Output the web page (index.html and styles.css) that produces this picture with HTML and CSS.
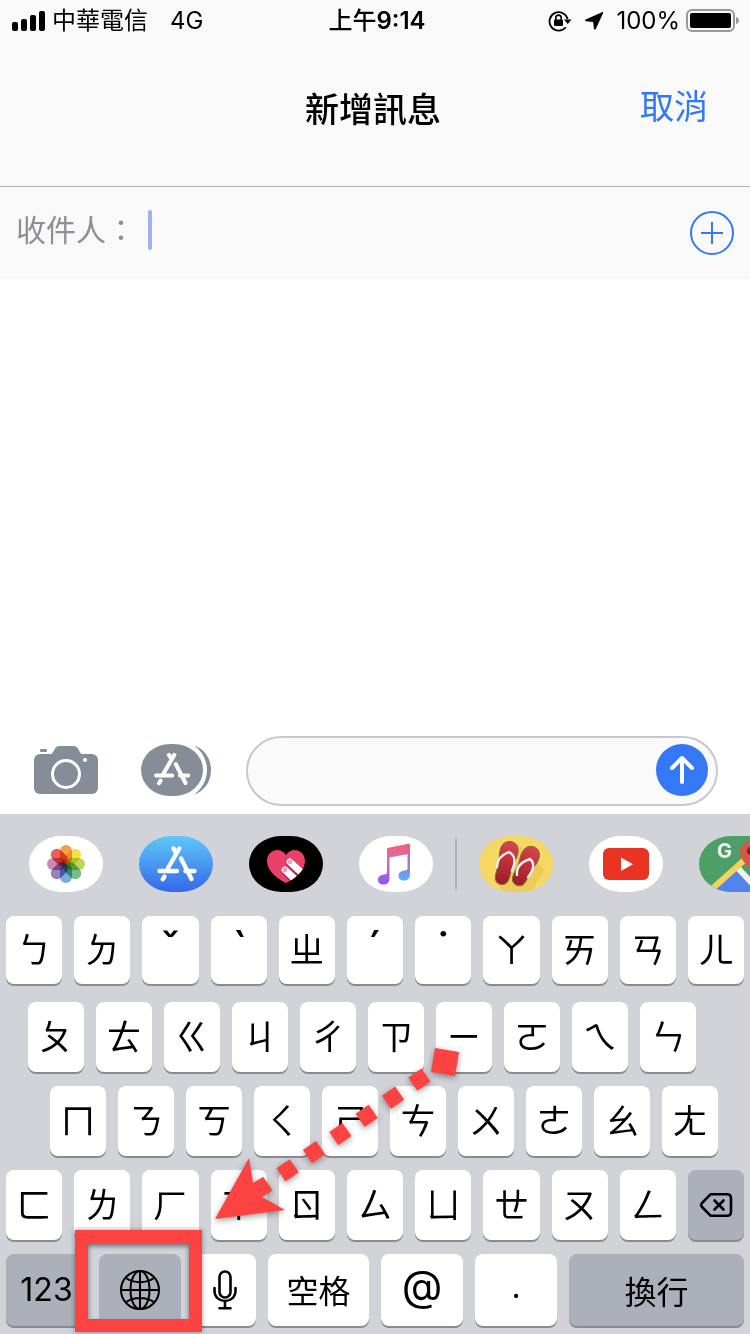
FILE: index.html
```html
<!DOCTYPE html>
<html lang="zh-Hant">
<head>
    <meta charset="UTF-8">
    <meta name="viewport" content="width=device-width, initial-scale=1.0">
    <title>新增訊息</title>
    <link rel="stylesheet" href="styles.css">
</head>
<body>

    <div class="status-bar">
        <div class="status-left">
            <svg class="signal" width="34" height="20" viewBox="0 0 34 20">
                <rect x="0" y="11" width="6" height="9" rx="2"/>
                <rect x="9" y="8" width="6" height="12" rx="2"/>
                <rect x="18" y="4" width="6" height="16" rx="2"/>
                <rect x="27" y="0" width="6" height="20" rx="2"/>
            </svg>
            <span>中華電信</span>
            <span class="network">4G</span>
        </div>
        <div class="clock"><span class="period">上午</span>9:14</div>
        <div class="status-right">
            <svg width="24" height="22" viewBox="0 0 24 22">
                <path d="M17.8 17.2A9.2 9.2 0 1 1 19.6 9" fill="none" stroke="#000" stroke-width="1.8"/>
                <path d="M16 9.5h7.5L19.700 14z"/>
                <rect x="6" y="9.5" width="9" height="6.5" rx="1"/>
                <path d="M7.8 10V7.8a2.7 2.7 0 0 1 5.4 0V10" fill="none" stroke="#000" stroke-width="1.6"/>
            </svg>
            <svg class="location" width="20" height="20" viewBox="0 0 20 20">
                <path d="M18 1.2c.8-.3 1.3.1 1 1L11.800 18c-.4.9-1.800.8-1.900-.2L9.200 10.900 1.900 10.200c-1-.1-1.100-1.200-.2-1.600z"/>
            </svg>
            <span>100%</span>
            <svg class="battery" width="54" height="24" viewBox="0 0 54 24">
                <rect x="1" y="1" width="47" height="21" rx="5" fill="none" stroke="#999" stroke-width="2"/>
                <rect x="4" y="4" width="41" height="15" rx="2"/>
                <path d="M50 8c4 1 4 6 0 7z" fill="#999"/>
            </svg>
        </div>
    </div>

    <header class="nav-bar">
        <h1>新增訊息</h1>
        <button class="btn-cancel">取消</button>
    </header>

    <div class="recipient">
        <label for="recipientName">收件人：</label>
        <span class="caret"></span>
        <input type="text" id="recipientName">
        <button class="btn-add" aria-label="加入聯絡人">
            <svg width="44" height="44" viewBox="0 0 44 44" fill="none" stroke="#3478f6" stroke-width="2">
                <circle cx="22" cy="22" r="21"/>
                <path d="M11 22h22M22 11v22"/>
            </svg>
        </button>
    </div>

    <main class="conversation"></main>

    <div class="compose">
        <button class="btn-camera" aria-label="相機">
            <svg width="64" height="50" viewBox="0 0 64 50" fill="#868d99">
                <rect x="0" y="9" width="64" height="40" rx="6"/>
                <path d="M15 10c6-1 4-9 11-9h13c7 0 5 8 11 9z"/>
                <rect x="6" y="4" width="7" height="3" rx="1"/>
                <circle cx="32" cy="29" r="13.500" stroke="#fff" stroke-width="3"/>
                <circle cx="51" cy="15" r="2" fill="#fff"/>
            </svg>
        </button>
        <button class="btn-apps" aria-label="App">
            <svg width="70" height="52" viewBox="0 0 70 52" fill="#868d99">
                <rect x="0" y="0" width="62" height="52" rx="29" ry="26"/>
                <path d="M53 1.500C64 5 70 15 70 26S64 47 53 50.500C61 45 66 36 66 26S61 7 53 1.500z"/>
                <use href="#appA" transform="translate(-3.800 -.6) scale(.92)"/>
            </svg>
        </button>
        <div class="message-box">
            <input type="text" id="message" aria-label="訊息">
            <button class="btn-send" aria-label="傳送">
                <svg width="52" height="52" viewBox="0 0 52 52" fill="none" stroke="#fff" stroke-width="4" stroke-linecap="round" stroke-linejoin="round">
                    <path d="M26 38V14M16 24l10-10 10 10"/>
                </svg>
            </button>
        </div>
    </div>

    <section class="keyboard">
        <div class="app-strip">
            <div class="app-group">
                <button class="app" aria-label="照片">
                    <svg class="petals" width="74" height="56" viewBox="0 0 74 56">
                        <g transform="translate(37 28)">
                            <rect x="-6" y="-19" width="12" height="19" rx="6" fill="#f3a04a"/>
                            <rect x="-6" y="-19" width="12" height="19" rx="6" fill="#f4e04a" transform="rotate(45)"/>
                            <rect x="-6" y="-19" width="12" height="19" rx="6" fill="#bdd65c" transform="rotate(90)"/>
                            <rect x="-6" y="-19" width="12" height="19" rx="6" fill="#74bd84" transform="rotate(135)"/>
                            <rect x="-6" y="-19" width="12" height="19" rx="6" fill="#76aede" transform="rotate(180)"/>
                            <rect x="-6" y="-19" width="12" height="19" rx="6" fill="#9482bd" transform="rotate(225)"/>
                            <rect x="-6" y="-19" width="12" height="19" rx="6" fill="#c98bb5" transform="rotate(270)"/>
                            <rect x="-6" y="-19" width="12" height="19" rx="6" fill="#e8605a" transform="rotate(315)"/>
                        </g>
                    </svg>
                </button>
                <button class="app app-store" aria-label="App Store">
                    <svg width="74" height="56" viewBox="0 0 74 56">
                        <g id="appA" fill="none" stroke="#fff" stroke-width="4.400" stroke-linecap="round">
                            <path d="M40.300 12.500L28.500 33M34.500 12.500l3 5M42 22.500L52.500 43M20.500 35H38M46.500 35h9M25.500 40.500l-1.800 2.800"/>
                        </g>
                    </svg>
                </button>
                <button class="app app-heart" aria-label="Digital Touch">
                    <svg width="74" height="56" viewBox="0 0 74 56">
                        <clipPath id="heart">
                            <path d="M37 47C25 41 18 33 18 25c0-11 13-15 19-6 6-9 19-5 19 6 0 8-7 16-19 22z"/>
                        </clipPath>
                        <g clip-path="url(#heart)">
                            <rect width="74" height="56" fill="#ea4069"/>
                            <path d="M41 26.500L56 41M36 34.500L50 48" stroke="#b52348" stroke-width="8.500" stroke-linecap="round"/>
                            <path d="M41 26L56 40M36 34L50 47" stroke="#fff" stroke-width="7" stroke-linecap="round"/>
                            <circle cx="41" cy="26" r="2.400" fill="#f2a0b8"/>
                            <circle cx="36" cy="34" r="2.400" fill="#f2a0b8"/>
                        </g>
                    </svg>
                </button>
                <button class="app" aria-label="音樂">
                    <svg width="74" height="56" viewBox="0 0 74 56">
                        <defs>
                            <linearGradient id="noteLeft" gradientUnits="userSpaceOnUse" x1="0" y1="8" x2="0" y2="48">
                                <stop offset="0" stop-color="#fa5f6c"/>
                                <stop offset=".4" stop-color="#d46abd"/>
                                <stop offset="1" stop-color="#8f55fb"/>
                            </linearGradient>
                            <linearGradient id="noteRight" gradientUnits="userSpaceOnUse" x1="0" y1="8" x2="0" y2="44">
                                <stop offset="0" stop-color="#e8606e"/>
                                <stop offset=".5" stop-color="#9b7ade"/>
                                <stop offset="1" stop-color="#58aef5"/>
                            </linearGradient>
                        </defs>
                        <path d="M28 13.500q0-1.500 1.500-1.800L49.500 7.800V18L30.500 21.500V42c0 5-3 6.500-6 6.500-3.500 0-5.500-2-5.500-4.500 0-4 3-5 6-5.500 2.500-.4 3-.5 3-3z" fill="url(#noteLeft)"/>
                        <path d="M48.500 8l1-.2q1.500-.2 1.500 1.200V38c0 5-3 6.500-6 6.500-3.500 0-5.500-2-5.500-4.500 0-4 3-5 6-5.500 2.500-.4 3-.5 3-3z" fill="url(#noteRight)"/>
                    </svg>
                </button>
            </div>
            <div class="divider"></div>
            <div class="app-group">
                <button class="app app-sandals" aria-label="拖鞋">
                    <svg width="74" height="56" viewBox="0 0 74 56">
                        <defs>
                            <linearGradient id="sole" x1="0" y1="0" x2="0" y2="1">
                                <stop offset="0" stop-color="#d8454f"/>
                                <stop offset=".45" stop-color="#c0303a"/>
                                <stop offset="1" stop-color="#981c26"/>
                            </linearGradient>
                        </defs>
                        <path d="M39 8L66 34 52 56H26L16 46z" fill="#e3c04f" opacity=".5"/>
                        <path d="M27 5c6 0 9 5 9 11 0 6-2 8-2 14 0 5 0 7 0 10 0 6-3 9-7 9s-7-3-7-9c0-3 0-5 0-10 0-6-2-8-2-14 0-6 3-11 9-11z" transform="rotate(15 27 27)" fill="url(#sole)" stroke="#86643a"/>
                        <path d="M46 9c6 0 9 5 9 11 0 6-2 8-2 13 0 4 0 6 0 9 0 6-3 9-7 9s-7-3-7-9c0-3 0-5 0-9 0-5-2-7-2-13 0-6 3-11 9-11z" transform="rotate(26 46 31)" fill="url(#sole)" stroke="#86643a"/>
                        <g fill="none" stroke="#ececee" stroke-width="2.400" stroke-linecap="round" stroke-linejoin="round">
                            <path d="M18 31c0-7 4-12 12-15 6 3 7 10 3 19"/>
                            <path d="M38 39c-1-8 4-13 13-16 5 4 4 11-2 18"/>
                        </g>
                    </svg>
                </button>
                <button class="app" aria-label="YouTube">
                    <svg width="74" height="56" viewBox="0 0 74 56">
                        <rect x="14" y="12" width="46" height="32" rx="6" fill="#e93323"/>
                        <path d="M32 21.500v13.500l12-6.700z" fill="#fff"/>
                    </svg>
                </button>
                <button class="app app-maps" aria-label="Google Maps">
                    <svg width="74" height="56" viewBox="0 0 74 56">
                        <path d="M39 31L14 56h50z" fill="#5383ec"/>
                        <path d="M37 30l24 26" stroke="#f1f1f1" stroke-width="6"/>
                        <path d="M52 18L13 53" stroke="#f5d25c" stroke-width="6"/>
                        <path d="M52 38c-1-9-11-12-11-22a11 11 0 0 1 22 0c0 10-10 13-11 22z" fill="#d65745"/>
                        <circle cx="52" cy="15" r="4" fill="#6d2a22"/>
                        <text x="18" y="22" class="g-logo">G</text>
                    </svg>
                </button>
            </div>
        </div>

        <div class="key-row row-1">
            <button class="key">ㄅ</button>
            <button class="key">ㄉ</button>
            <button class="key key-tone">ˇ</button>
            <button class="key key-tone">ˋ</button>
            <button class="key">ㄓ</button>
            <button class="key key-tone">ˊ</button>
            <button class="key key-tone">˙</button>
            <button class="key">ㄚ</button>
            <button class="key">ㄞ</button>
            <button class="key">ㄢ</button>
            <button class="key">ㄦ</button>
        </div>
        <div class="key-row row-2">
            <button class="key">ㄆ</button>
            <button class="key">ㄊ</button>
            <button class="key">ㄍ</button>
            <button class="key">ㄐ</button>
            <button class="key">ㄔ</button>
            <button class="key">ㄗ</button>
            <button class="key">ㄧ</button>
            <button class="key">ㄛ</button>
            <button class="key">ㄟ</button>
            <button class="key">ㄣ</button>
        </div>
        <div class="key-row row-3">
            <button class="key">ㄇ</button>
            <button class="key">ㄋ</button>
            <button class="key">ㄎ</button>
            <button class="key">ㄑ</button>
            <button class="key">ㄕ</button>
            <button class="key">ㄘ</button>
            <button class="key">ㄨ</button>
            <button class="key">ㄜ</button>
            <button class="key">ㄠ</button>
            <button class="key">ㄤ</button>
        </div>
        <div class="key-row">
            <button class="key">ㄈ</button>
            <button class="key">ㄌ</button>
            <button class="key">ㄏ</button>
            <button class="key">ㄒ</button>
            <button class="key">ㄖ</button>
            <button class="key">ㄙ</button>
            <button class="key">ㄩ</button>
            <button class="key">ㄝ</button>
            <button class="key">ㄡ</button>
            <button class="key">ㄥ</button>
            <button class="key key-dark" aria-label="刪除">
                <svg width="34" height="26" viewBox="0 0 34 26" fill="none" stroke="#000" stroke-width="2.600" stroke-linecap="round" stroke-linejoin="round">
                    <path d="M11.500 2.300H28q4 0 4 4v13.400q0 4-4 4H11.500L3 15q-1.800-2 0-4z"/>
                    <path d="M15.500 8.500l9 9M24.500 8.500l-9 9"/>
                </svg>
            </button>
        </div>
        <div class="key-row row-5">
            <button class="key key-dark key-number">123</button>
            <button class="key key-dark key-medium" aria-label="切換鍵盤">
                <svg width="42" height="42" viewBox="0 0 42 42" fill="none" stroke="#000" stroke-width="2">
                    <circle cx="21" cy="21" r="19"/>
                    <ellipse cx="21" cy="21" rx="9.500" ry="19"/>
                    <path d="M2 21h38M21 2v38M7 9c8 5.500 20 5.500 28 0M7 33c8-5.500 20-5.500 28 0"/>
                </svg>
            </button>
            <button class="key key-mic" aria-label="聽寫">
                <svg width="26" height="40" viewBox="0 0 26 40" fill="none" stroke="#000" stroke-width="2.600" stroke-linecap="round">
                    <rect x="7.500" y="1.500" width="11" height="26" rx="5.500"/>
                    <path d="M2.500 18v2.500c0 14 21 14 21 0V18M13 31.500v6.500M7.500 38.300h11"/>
                </svg>
            </button>
            <button class="key key-space">空格</button>
            <button class="key key-medium key-at">@</button>
            <button class="key key-medium key-dot">.</button>
            <button class="key key-dark key-return">換行</button>
        </div>

        <!-- arrow pointing at the globe key -->
        <svg class="arrow" width="260" height="190" viewBox="0 0 260 190" fill="#fd4242">
            <path d="M231 8l24 4-4 24-24-4z"/>
            <path d="M222 35L58 148" stroke="#fd4242" stroke-width="16" stroke-dasharray="16 16"/>
            <path d="M11 179l34-61 4 25 10-6 9 13-10 7 23 13z"/>
        </svg>
        <div class="highlight"></div>
    </section>

</body>
</html>
```
FILE: styles.css
```css
* {
    box-sizing: border-box;
}
body {
    margin: 0;
    min-height: 100vh;
    display: flex;
    flex-direction: column;
    font-family: Inter, "Noto Sans CJK TC", sans-serif;
    background-color: #fff;
    color: #000;
}
button, input {
    font-family: inherit;
    color: inherit;
    border: none;
    padding: 0;
    background: none;
}
input {
    outline: none;
    width: 100%;
    min-width: 0;
}
button {
    cursor: pointer;
}
svg {
    display: block;
}

/* status bar */
.status-bar {
    display: grid;
    grid-template-columns: 1fr auto 1fr;
    align-items: center;
    height: 40px;
    padding: 1px 10px 0 12px;
    background-color: #f9f9f9;
    font-size: 24px;
    line-height: 40px;
}
.status-left, .status-right {
    display: flex;
    align-items: center;
}
.signal {
    margin-right: 6px;
}
.network {
    margin-left: 22px;
}
.clock {
    padding-left: 2px;
    font-weight: 600;
}
.period {
    font-weight: 500;
}
.status-right {
    justify-content: flex-end;
}
.location {
    margin: 0 12px;
}
.battery {
    margin-left: 6px;
}

/* header */
.nav-bar {
    display: grid;
    grid-template-columns: 1fr auto 1fr;
    align-items: center;
    height: 147px;
    padding: 0 42px 12px 38px;
    background-color: #f9f9f9;
    border-bottom: 1px solid #b2b2b2;
}
.nav-bar h1 {
    grid-column: 2;
    margin: 0;
    font-size: 34px;
    font-weight: 500;
}
.btn-cancel {
    justify-self: end;
    padding-bottom: 6px;
    font-size: 34px;
    color: #3478f6;
}
.recipient {
    display: flex;
    align-items: center;
    height: 92px;
    padding: 0 16px;
    background-color: #f9f9f9;
    font-size: 30px;
}
.recipient label {
    padding-bottom: 10px;
    color: #8e8e93;
}
.recipient input {
    flex: 1;
    font-size: 30px;
}
.btn-add {
    flex: none;
}
.caret {
    flex: none;
    width: 4px;
    height: 40px;
    margin: 0 0 6px 12px;
    border-radius: 2px;
    background-color: #9fb1f2;
}
.conversation {
    flex: 1;
}

/* compose */
.compose {
    display: flex;
    align-items: center;
    padding: 0 32px 8px 34px;
}
.btn-camera, .btn-apps {
    flex: none;
    padding-bottom: 2px;
}
.btn-apps {
    margin: 0 35px 0 43px;
}
.message-box {
    flex: 1;
    min-width: 0;
    display: flex;
    align-items: center;
    height: 70px;
    padding: 0 8px 2px 24px;
    border: 2px solid #c7c7cc;
    border-radius: 35px;
    background-color: #fafafa;
}
.message-box input {
    flex: 1;
    font-size: 34px;
}
.btn-send {
    flex: none;
    width: 52px;
    height: 52px;
    border-radius: 50%;
    background-color: #3478f6;
}

/* keyboard */
.keyboard {
    position: relative;
    display: flex;
    flex-direction: column;
    gap: 14px;
    padding-bottom: 8px;
    background-color: #d1d3d9;
    overflow: hidden;
}
.app-strip {
    display: flex;
    align-items: center;
    height: 88px;
    padding: 11px 0 0 29px;
    overflow: hidden;
}
.app-group {
    display: flex;
    gap: 36px;
}
.app-group:last-child {
    flex: 1;
    min-width: 0;
    overflow: hidden;
}
.app {
    flex: none;
    width: 74px;
    height: 56px;
    border-radius: 32px / 28px;
    background-color: #fff;
    overflow: hidden;
}
.petals rect {
    mix-blend-mode: multiply;
}
.app-store {
    background: linear-gradient(#5ec8f8, #3567ea);
}
.app-heart {
    background-color: #000;
}
.app-sandals {
    background-color: #f6d865;
}
/* the last app is cut by the edge of the strip */
.app-maps {
    flex: 0 1 74px;
    min-width: 0;
    border-radius: 32px 0 0 32px / 28px 0 0 28px;
    background-color: #4c9f67;
}
.g-logo {
    font-size: 20px;
    font-weight: 700;
    fill: #f1f1f1;
}
.divider {
    flex: none;
    width: 2px;
    height: 52px;
    margin: 0 22px;
    background-color: #b2b4b9;
}
.key-row {
    display: flex;
    gap: 12px;
    height: 70px;
    padding: 0 6px;
}
.row-1 {
    height: 68px;
    margin-bottom: 4px;
}
.row-2 {
    padding: 0 54px 0 28px;
}
.row-3 {
    padding: 0 32px 0 50px;
}
.row-5 {
    height: 72px;
}
.key {
    flex: 1;
    min-width: 0;
    display: flex;
    align-items: center;
    justify-content: center;
    padding-bottom: 4px;
    border-radius: 8px;
    background-color: #fff;
    box-shadow: 0 2px 0 #898b8f;
    font-family: "Noto Sans CJK TC", sans-serif;
    font-size: 35px;
    line-height: 48px;
}
.key-tone {
    padding-bottom: 0;
    font-family: Inter, "Noto Sans", sans-serif;
    font-size: 48px;
}
.key-dark {
    padding-bottom: 0;
    background-color: #abb0bb;
}
.key-number {
    flex: 81;
    font-family: Inter, sans-serif;
    font-size: 32px;
}
.key-medium {
    flex: 82;
}
.key-mic {
    flex: 63;
    padding-bottom: 0;
}
.key-space {
    flex: 101;
    padding-bottom: 2px;
    font-size: 32px;
}
.key-at {
    padding-bottom: 8px;
    font-family: Inter, sans-serif;
    font-size: 42px;
}
.key-dot {
    padding-bottom: 6px;
    font-family: Inter, sans-serif;
    font-size: 32px;
}
.key-return {
    flex: 175;
    font-size: 32px;
}

/* marks over the keyboard */
.arrow {
    position: absolute;
    left: 204px;
    top: 226px;
    filter: drop-shadow(0 2px 3px rgba(0, 0, 0, .4));
    pointer-events: none;
}
.highlight {
    position: absolute;
    left: 75px;
    top: 416px;
    width: 127px;
    height: 102px;
    border: 13px solid #fd4242;
    box-shadow: 0 0 5px rgba(0, 0, 0, .4), inset 0 3px 5px rgba(0, 0, 0, .5);
    pointer-events: none;
}
```
